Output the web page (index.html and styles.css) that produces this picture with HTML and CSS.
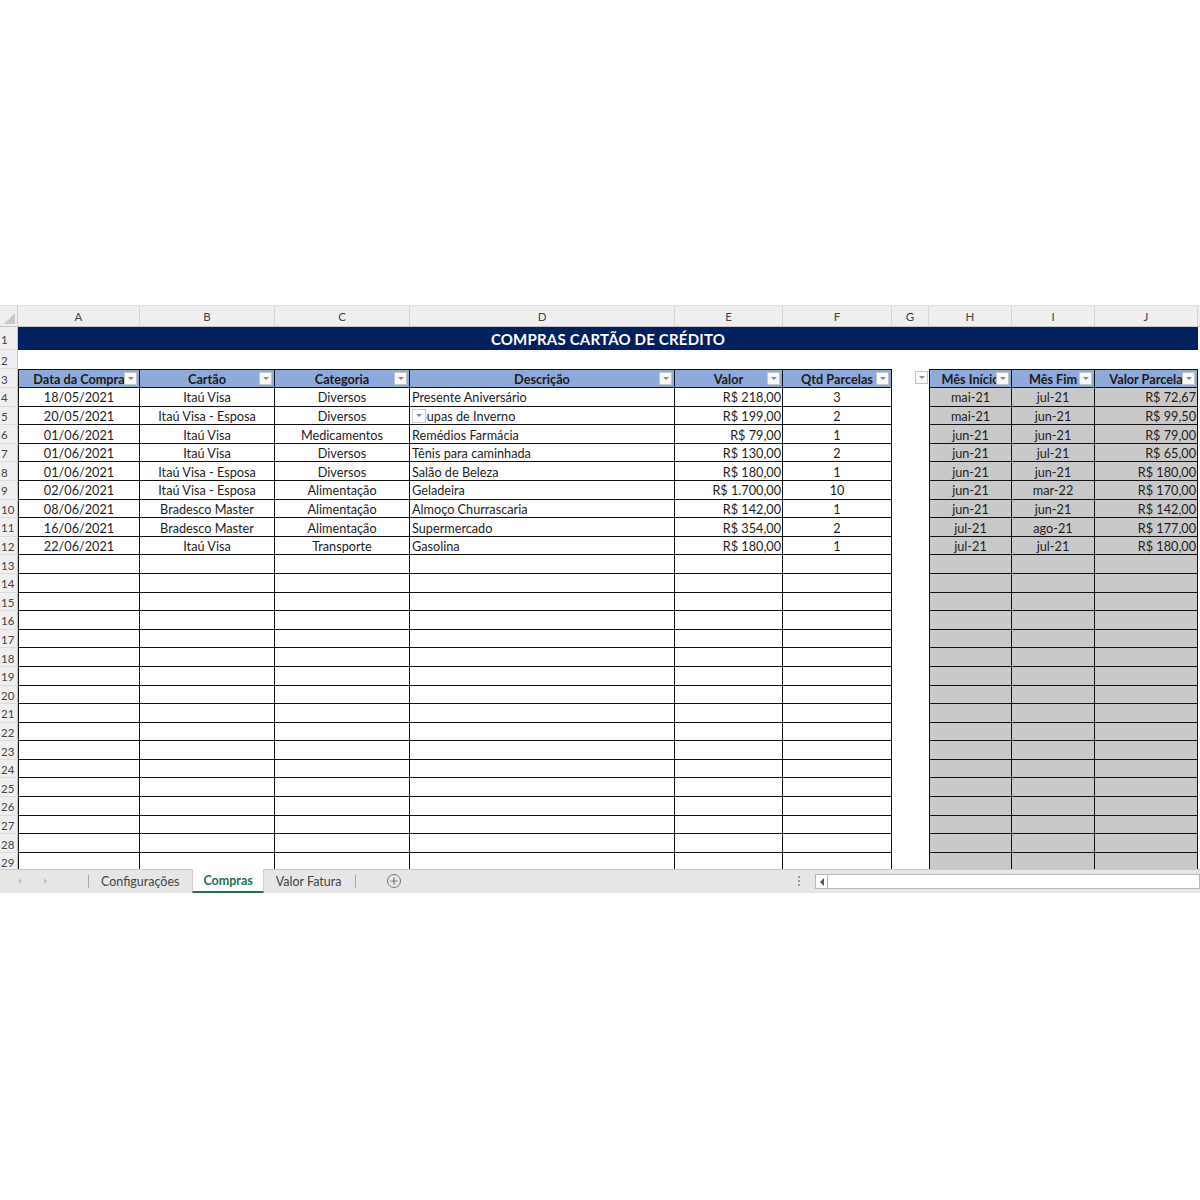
FILE: index.html
```html
<!DOCTYPE html>
<html lang="pt-BR">
<head>
<meta charset="utf-8">
<title>Compras Cartão de Crédito</title>
<link rel="stylesheet" href="styles.css">
</head>
<body>
<div class="page">
  <div class="excel">
    <div class="sheet">
      <!-- column headers -->
      <div class="corner"><span class="corner-tri"></span></div>
      <div class="ch">A</div><div class="ch">B</div><div class="ch">C</div><div class="ch">D</div><div class="ch">E</div><div class="ch">F</div><div class="ch">G</div><div class="ch">H</div><div class="ch">I</div><div class="ch">J</div><div class="ch"></div>

      <!-- row 1 -->
      <div class="rh">1</div>
      <div class="banner">COMPRAS CARTÃO DE CRÉDITO</div>
      <div class="k"></div>

      <!-- row 2 -->
      <div class="rh">2</div>
      <div class="blank"></div>

      <!-- row 3 -->
      <div class="rh">3</div>
      <div class="c a th">Data da Compra<span class="flt"></span></div>
      <div class="c th">Cartão<span class="flt"></span></div>
      <div class="c th">Categoria<span class="flt"></span></div>
      <div class="c th">Descrição<span class="flt"></span></div>
      <div class="c th">Valor<span class="flt"></span></div>
      <div class="c th">Qtd Parcelas<span class="flt"></span></div>
      <div class="g gh"><span class="flt"></span></div>
      <div class="c h th">Mês Início<span class="flt"></span></div>
      <div class="c th">Mês Fim<span class="flt"></span></div>
      <div class="c th">Valor Parcela<span class="flt"></span></div>
      <div class="k"></div>

      <div class="rh">4</div><div class="c a ctr">18/05/2021</div><div class="c ctr">Itaú Visa</div><div class="c ctr">Diversos</div><div class="c lft">Presente Aniversário</div><div class="c rgt">R$ 218,00</div><div class="c ctr">3</div><div class="g"></div><div class="c gr h ctr">mai-21</div><div class="c gr ctr">jul-21</div><div class="c gr rgt">R$ 72,67</div><div class="k"></div>
      <div class="rh">5</div><div class="c a ctr">20/05/2021</div><div class="c ctr">Itaú Visa - Esposa</div><div class="c ctr">Diversos</div><div class="c lft">Roupas de Inverno<span class="dd"></span></div><div class="c rgt">R$ 199,00</div><div class="c ctr">2</div><div class="g"></div><div class="c gr h ctr">mai-21</div><div class="c gr ctr">jun-21</div><div class="c gr rgt">R$ 99,50</div><div class="k"></div>
      <div class="rh">6</div><div class="c a ctr">01/06/2021</div><div class="c ctr">Itaú Visa</div><div class="c ctr">Medicamentos</div><div class="c lft">Remédios Farmácia</div><div class="c rgt">R$ 79,00</div><div class="c ctr">1</div><div class="g"></div><div class="c gr h ctr">jun-21</div><div class="c gr ctr">jun-21</div><div class="c gr rgt">R$ 79,00</div><div class="k"></div>
      <div class="rh">7</div><div class="c a ctr">01/06/2021</div><div class="c ctr">Itaú Visa</div><div class="c ctr">Diversos</div><div class="c lft">Tênis para caminhada</div><div class="c rgt">R$ 130,00</div><div class="c ctr">2</div><div class="g"></div><div class="c gr h ctr">jun-21</div><div class="c gr ctr">jul-21</div><div class="c gr rgt">R$ 65,00</div><div class="k"></div>
      <div class="rh">8</div><div class="c a ctr">01/06/2021</div><div class="c ctr">Itaú Visa - Esposa</div><div class="c ctr">Diversos</div><div class="c lft">Salão de Beleza</div><div class="c rgt">R$ 180,00</div><div class="c ctr">1</div><div class="g"></div><div class="c gr h ctr">jun-21</div><div class="c gr ctr">jun-21</div><div class="c gr rgt">R$ 180,00</div><div class="k"></div>
      <div class="rh">9</div><div class="c a ctr">02/06/2021</div><div class="c ctr">Itaú Visa - Esposa</div><div class="c ctr">Alimentação</div><div class="c lft">Geladeira</div><div class="c rgt">R$ 1.700,00</div><div class="c ctr">10</div><div class="g"></div><div class="c gr h ctr">jun-21</div><div class="c gr ctr">mar-22</div><div class="c gr rgt">R$ 170,00</div><div class="k"></div>
      <div class="rh">10</div><div class="c a ctr">08/06/2021</div><div class="c ctr">Bradesco Master</div><div class="c ctr">Alimentação</div><div class="c lft">Almoço Churrascaria</div><div class="c rgt">R$ 142,00</div><div class="c ctr">1</div><div class="g"></div><div class="c gr h ctr">jun-21</div><div class="c gr ctr">jun-21</div><div class="c gr rgt">R$ 142,00</div><div class="k"></div>
      <div class="rh">11</div><div class="c a ctr">16/06/2021</div><div class="c ctr">Bradesco Master</div><div class="c ctr">Alimentação</div><div class="c lft">Supermercado</div><div class="c rgt">R$ 354,00</div><div class="c ctr">2</div><div class="g"></div><div class="c gr h ctr">jul-21</div><div class="c gr ctr">ago-21</div><div class="c gr rgt">R$ 177,00</div><div class="k"></div>
      <div class="rh">12</div><div class="c a ctr">22/06/2021</div><div class="c ctr">Itaú Visa</div><div class="c ctr">Transporte</div><div class="c lft">Gasolina</div><div class="c rgt">R$ 180,00</div><div class="c ctr">1</div><div class="g"></div><div class="c gr h ctr">jul-21</div><div class="c gr ctr">jul-21</div><div class="c gr rgt">R$ 180,00</div><div class="k"></div>

      <div class="rh">13</div><div class="c a"></div><div class="c"></div><div class="c"></div><div class="c"></div><div class="c"></div><div class="c"></div><div class="g"></div><div class="c gr h"></div><div class="c gr"></div><div class="c gr"></div><div class="k"></div>
      <div class="rh">14</div><div class="c a"></div><div class="c"></div><div class="c"></div><div class="c"></div><div class="c"></div><div class="c"></div><div class="g"></div><div class="c gr h"></div><div class="c gr"></div><div class="c gr"></div><div class="k"></div>
      <div class="rh">15</div><div class="c a"></div><div class="c"></div><div class="c"></div><div class="c"></div><div class="c"></div><div class="c"></div><div class="g"></div><div class="c gr h"></div><div class="c gr"></div><div class="c gr"></div><div class="k"></div>
      <div class="rh">16</div><div class="c a"></div><div class="c"></div><div class="c"></div><div class="c"></div><div class="c"></div><div class="c"></div><div class="g"></div><div class="c gr h"></div><div class="c gr"></div><div class="c gr"></div><div class="k"></div>
      <div class="rh">17</div><div class="c a"></div><div class="c"></div><div class="c"></div><div class="c"></div><div class="c"></div><div class="c"></div><div class="g"></div><div class="c gr h"></div><div class="c gr"></div><div class="c gr"></div><div class="k"></div>
      <div class="rh">18</div><div class="c a"></div><div class="c"></div><div class="c"></div><div class="c"></div><div class="c"></div><div class="c"></div><div class="g"></div><div class="c gr h"></div><div class="c gr"></div><div class="c gr"></div><div class="k"></div>
      <div class="rh">19</div><div class="c a"></div><div class="c"></div><div class="c"></div><div class="c"></div><div class="c"></div><div class="c"></div><div class="g"></div><div class="c gr h"></div><div class="c gr"></div><div class="c gr"></div><div class="k"></div>
      <div class="rh">20</div><div class="c a"></div><div class="c"></div><div class="c"></div><div class="c"></div><div class="c"></div><div class="c"></div><div class="g"></div><div class="c gr h"></div><div class="c gr"></div><div class="c gr"></div><div class="k"></div>
      <div class="rh">21</div><div class="c a"></div><div class="c"></div><div class="c"></div><div class="c"></div><div class="c"></div><div class="c"></div><div class="g"></div><div class="c gr h"></div><div class="c gr"></div><div class="c gr"></div><div class="k"></div>
      <div class="rh">22</div><div class="c a"></div><div class="c"></div><div class="c"></div><div class="c"></div><div class="c"></div><div class="c"></div><div class="g"></div><div class="c gr h"></div><div class="c gr"></div><div class="c gr"></div><div class="k"></div>
      <div class="rh">23</div><div class="c a"></div><div class="c"></div><div class="c"></div><div class="c"></div><div class="c"></div><div class="c"></div><div class="g"></div><div class="c gr h"></div><div class="c gr"></div><div class="c gr"></div><div class="k"></div>
      <div class="rh">24</div><div class="c a"></div><div class="c"></div><div class="c"></div><div class="c"></div><div class="c"></div><div class="c"></div><div class="g"></div><div class="c gr h"></div><div class="c gr"></div><div class="c gr"></div><div class="k"></div>
      <div class="rh">25</div><div class="c a"></div><div class="c"></div><div class="c"></div><div class="c"></div><div class="c"></div><div class="c"></div><div class="g"></div><div class="c gr h"></div><div class="c gr"></div><div class="c gr"></div><div class="k"></div>
      <div class="rh">26</div><div class="c a"></div><div class="c"></div><div class="c"></div><div class="c"></div><div class="c"></div><div class="c"></div><div class="g"></div><div class="c gr h"></div><div class="c gr"></div><div class="c gr"></div><div class="k"></div>
      <div class="rh">27</div><div class="c a"></div><div class="c"></div><div class="c"></div><div class="c"></div><div class="c"></div><div class="c"></div><div class="g"></div><div class="c gr h"></div><div class="c gr"></div><div class="c gr"></div><div class="k"></div>
      <div class="rh">28</div><div class="c a"></div><div class="c"></div><div class="c"></div><div class="c"></div><div class="c"></div><div class="c"></div><div class="g"></div><div class="c gr h"></div><div class="c gr"></div><div class="c gr"></div><div class="k"></div>
      <div class="rh last">29</div><div class="c a nb"></div><div class="c nb"></div><div class="c nb"></div><div class="c nb"></div><div class="c nb"></div><div class="c nb"></div><div class="g"></div><div class="c gr h nb"></div><div class="c gr nb"></div><div class="c gr nb"></div><div class="k"></div>
    </div>

    <div class="tabs">
      <div class="navs"><span class="tri-l"></span><span class="tri-r"></span></div>
      <div class="sep"></div>
      <div class="tab">Configurações</div>
      <div class="tab active">Compras</div>
      <div class="tab">Valor Fatura</div>
      <div class="sep"></div>
      <div class="plus">
        <svg width="16" height="16" viewBox="0 0 16 16"><circle cx="8" cy="8" r="6.5" fill="none" stroke="#7a7a7a" stroke-width="1"/><path d="M8 4.5v7M4.5 8h7" stroke="#7a7a7a" stroke-width="1.2"/></svg>
      </div>
      <div class="spacer"></div>
      <div class="dots"><span></span><span></span><span></span></div>
      <div class="hscroll">
        <div class="sbtn"><span class="tri-sl"></span></div>
        <div class="track"></div>
      </div>
    </div>
  </div>
</div>
</body>
</html>
```
FILE: styles.css
```css
* { box-sizing: border-box; }
html, body { margin: 0; padding: 0; background: #fff; }
body { font-family: Lato, "Liberation Sans", sans-serif; }

.page { padding-top: 305px; width: 1200px; overflow: hidden; }
.excel { width: 1200px; overflow: hidden; border-top: 1px solid #e2e2e2; }

.sheet {
  display: grid;
  grid-template-columns: 18px 122px 135px 135px 265px 108px 109px 37px 83px 83px 103px 40px;
  grid-template-rows: 21px 23px 19px 19px repeat(25, 18.6px) 16px;
  width: 1240px;
  font-size: 12.7px;
  color: #1e1e1e;
}

.corner { background: #efefef; border-right: 1px solid #cfcfcf; border-bottom: 1px solid #c4c4c4; position: relative; }
.corner-tri { position: absolute; right: 2px; bottom: 2px; width: 0; height: 0; border-left: 11px solid transparent; border-bottom: 11px solid #c9c9c9; }
.ch {
  background: #efefef; border-right: 1px solid #d6d6d6; border-bottom: 1px solid #c4c4c4;
  display: flex; align-items: center; justify-content: center;
  font-size: 11.5px; color: #444; padding-top: 1px;
}
.rh {
  background: #efefef; border-right: 1px solid #c4c4c4; border-bottom: 1px solid #dcdcdc;
  font-size: 11.5px; color: #444; display: flex; align-items: center; padding: 2px 0 0 1px;
}
.rh.last { align-items: flex-start; padding-top: 3px; border-bottom: none; }

.banner {
  grid-column: 2 / span 10;
  background: #002060; color: #fff; font-weight: 700; font-size: 15px;
  display: flex; align-items: center; justify-content: center; letter-spacing: 0.2px; padding-top: 1px;
}
.blank { grid-column: 2 / span 11; }
.k { background: #fff; }

.c {
  position: relative;
  border-right: 1px solid #111; border-bottom: 1px solid #111;
  display: flex; align-items: center; white-space: nowrap; overflow: hidden;
  padding: 2px 2px 0; line-height: 1;
}
.c.a { border-left: 1px solid #111; }
.c.h { border-left: 1px solid #111; }
.c.nb { border-bottom: none; }
.ctr { justify-content: center; }
.lft { justify-content: flex-start; }
.rgt { justify-content: flex-end; padding-right: 1px; }
.gr { background: #c9c9c9; }
.g { background: #fff; }
.gh { position: relative; }

.th { background: #8eaadb; font-weight: 700; justify-content: center; border-top: 1px solid #111; color: #1a1a1a; }

.flt {
  position: absolute; right: 2px; top: 2px; width: 13px; height: 13px;
  background: #fafafa; border: 1px solid #c4c4c4;
}
.flt::after {
  content: ""; position: absolute; left: 3px; top: 4px; width: 0; height: 0;
  border-left: 3px solid transparent; border-right: 3px solid transparent; border-top: 3px solid #8a8a8a;
}
.gh .flt { right: 1px; top: 2px; }

.dd {
  position: absolute; left: 2px; top: 2px; width: 14px; height: 14px;
  background: #fff; border: 1px solid #cfcfcf;
}
.dd::after {
  content: ""; position: absolute; left: 3px; top: 4px; width: 0; height: 0;
  border-left: 3px solid transparent; border-right: 3px solid transparent; border-top: 3px solid #8a8a8a;
}

/* tab bar */
.tabs {
  display: flex; align-items: stretch; height: 24px;
  background: #e6e6e6; border-top: 1px solid #c8c8c8;
  font-size: 12.5px; color: #444;
}
.navs { width: 88px; display: flex; align-items: center; padding-left: 18px; gap: 23px; }
.tri-l { width: 0; height: 0; border-top: 3px solid transparent; border-bottom: 3px solid transparent; border-right: 3px solid #c4c4c4; }
.tri-r { width: 0; height: 0; border-top: 3px solid transparent; border-bottom: 3px solid transparent; border-left: 3px solid #c4c4c4; }
.sep { width: 1px; background: #a8a8a8; margin: 5px 0; }
.tab { display: flex; align-items: center; padding: 0 13px 0 12px; }
.tab.active {
  background: #fff; color: #217346; font-weight: 700;
  border-left: 1px solid #cfcfcf; border-right: 1px solid #cfcfcf;
  border-bottom: 2px solid #217346; padding: 1px 10px 0;
  margin-top: -1px;
}
.tab.active + .tab { padding: 0 14px 0 12px; }
.plus { display: flex; align-items: center; padding-left: 30px; }
.spacer { flex: 1; }
.dots { display: flex; flex-direction: column; justify-content: center; gap: 2px; width: 18px; padding-left: 1px; }
.dots span { width: 2px; height: 2px; background: #9a9a9a; }
.hscroll { width: 385px; display: flex; align-items: center; }
.sbtn { width: 13px; height: 15px; background: #fff; border: 1px solid #b8b8b8; position: relative; }
.tri-sl { position: absolute; left: 4px; top: 3px; width: 0; height: 0; border-top: 4px solid transparent; border-bottom: 4px solid transparent; border-right: 4px solid #555; }
.track { flex: 1; height: 15px; background: #fff; border: 1px solid #b8b8b8; border-left: none; }
```
